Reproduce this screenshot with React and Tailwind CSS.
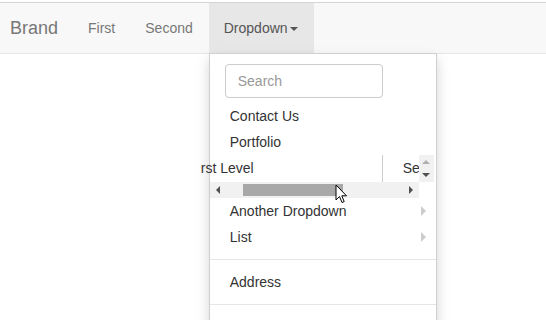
export default function App() {
  return (
    <div className="relative w-[546px] h-[320px] overflow-hidden bg-white font-['Liberation_Sans',Arial,sans-serif] text-[14px] leading-[20px]">
      <div className="mt-[2px] h-[52px] border-t border-b border-t-[#d4d4d4] border-b-[#e7e7e7] bg-[#f8f8f8] flex items-stretch">
        <div className="pl-[10px] pr-[15px] flex items-center text-[18px] text-[#777]">Brand</div>
        <div className="px-[15px] flex items-center text-[#777]">First</div>
        <div className="pl-[15px] pr-[16px] flex items-center text-[#777]">Second</div>
        <div className="relative pl-[15px] pr-[16px] flex items-center bg-[#e7e7e7] text-[#555]">
          <span>Dropdown</span>
          <span className="ml-[2px] mt-[1px] w-0 h-0 border-x-[4px] border-x-transparent border-t-[4px] border-t-[#555]"></span>
          <div className="absolute left-0 top-[50px] z-10 w-[228px] h-[280px] bg-white border border-[#d0d0d0] shadow-[0_6px_12px_rgba(0,0,0,0.175)] pt-[5px] text-[#333]">
            <div className="px-[15px] py-[5px]">
              <div className="w-[158px] h-[34px] border border-[#ccc] rounded-[4px] px-[12px] flex items-center text-[#999]">Search</div>
            </div>
            <div className="h-[26px] px-[20px] flex items-center">Contact Us</div>
            <div className="h-[26px] px-[20px] flex items-center">Portfolio</div>
            <div className="flex h-[27px]">
              <div className="ml-[-15px] w-[188px] border-r border-[#ccc] pl-[6px] pb-[1px] flex items-center whitespace-nowrap">rst Level</div>
              <div className="w-[36px] pl-[20px] pb-[1px] flex items-center whitespace-nowrap">Se</div>
              <div className="w-[15px] bg-[#f1f1f1] flex flex-col items-center justify-between py-[5px]">
                <span className="w-0 h-0 border-x-[4px] border-x-transparent border-b-[4px] border-b-[#b0b0b0]"></span>
                <span className="w-0 h-0 border-x-[4px] border-x-transparent border-t-[4px] border-t-[#505050]"></span>
              </div>
            </div>
            <div className="flex h-[16px]">
              <div className="w-[209px] bg-[#f1f1f1] flex items-center">
                <span className="ml-[6px] w-0 h-0 border-y-[4px] border-y-transparent border-r-[4px] border-r-[#505050]"></span>
                <div className="ml-[23px] w-[100px] h-[12px] bg-[#a8a8a8]"></div>
                <span className="ml-auto mr-[6px] w-0 h-0 border-y-[4px] border-y-transparent border-l-[4px] border-l-[#505050]"></span>
              </div>
            </div>
            <div className="h-[26px] px-[20px] flex items-center justify-between">
              <span>Another Dropdown</span>
              <span className="mr-[-10px] w-0 h-0 border-y-[5px] border-y-transparent border-l-[5px] border-l-[#ccc]"></span>
            </div>
            <div className="h-[26px] px-[20px] flex items-center justify-between">
              <span>List</span>
              <span className="mr-[-10px] w-0 h-0 border-y-[5px] border-y-transparent border-l-[5px] border-l-[#ccc]"></span>
            </div>
            <div className="my-[9px] h-px bg-[#e5e5e5]"></div>
            <div className="h-[26px] px-[20px] flex items-center">Address</div>
            <div className="my-[9px] h-px bg-[#e5e5e5]"></div>
          </div>
        </div>
      </div>
      <svg className="absolute left-[335px] top-[184px] z-20" width="13" height="21" viewBox="0 0 13 21">
        <path d="M1 1 L1 16 L4.5 12.5 L7 18.5 L9.2 17.6 L6.8 11.8 L11.5 11.8 Z" fill="#fff" stroke="#000" strokeWidth="1" strokeLinejoin="round" />
      </svg>
    </div>
  );
}
